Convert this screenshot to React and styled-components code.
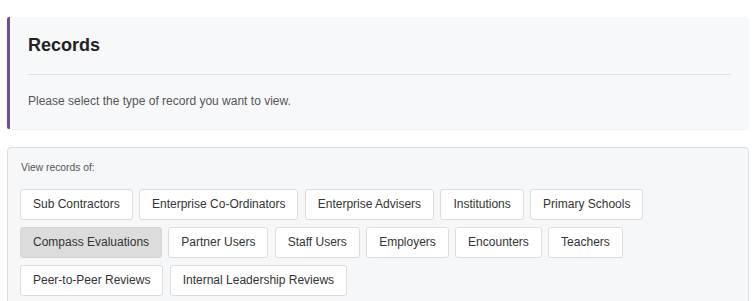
import React from "react";
import styled, { createGlobalStyle } from "styled-components";

const Global = createGlobalStyle`
  html, body { margin: 0; padding: 0; background: #ffffff; }
  body { font-family: "Liberation Sans", Arial, sans-serif; color: #333; }
`;

const Page = styled.div`
  padding: 17px 5px 0 7px;
  display: flex;
  flex-direction: column;
  gap: 18px;
`;

const HeaderCard = styled.section`
  background: #f7f8fa;
  border-left: 3px solid #6f4e9c;
  border-radius: 2px 4px 4px 2px;
  box-shadow: 0 1px 2px rgba(0, 0, 0, 0.06);
  padding: 17.5px 18px 21px 18px;
`;

const Title = styled.h1`
  margin: 0;
  font-size: 18px;
  font-weight: 700;
  color: #222;
  line-height: normal;
`;

const Divider = styled.hr`
  margin: 18.5px 0 19px;
  border: 0;
  border-top: 1px solid #dedfe2;
  height: 0;
`;

const Intro = styled.p`
  margin: 0;
  font-size: 12px;
  color: #555;
  line-height: normal;
`;

const FilterCard = styled.section`
  background: #f6f7f9;
  border: 1px solid #dcdee2;
  border-radius: 4px;
  padding: 13.5px 12px 20px 12px;
`;

const Label = styled.div`
  font-size: 10.3px;
  color: #555;
  line-height: normal;
  margin: 0 0 16px 1px;
`;

const ButtonRows = styled.div`
  display: flex;
  flex-direction: column;
  gap: 7px;
`;

const ButtonRow = styled.div`
  display: flex;
  gap: 6.3px;
`;

const RecordButton = styled.button`
  box-sizing: border-box;
  font-family: "Liberation Sans", Arial, sans-serif;
  font-size: 12px;
  line-height: 17px;
  color: #333;
  padding: 6px 12px;
  height: 31px;
  border: 1px solid ${(p) => (p.$active ? "#d6d6d6" : "#dcdcdc")};
  background: ${(p) => (p.$active ? "#dcdcdc" : "#ffffff")};
  border-radius: 3px;
  cursor: pointer;
  white-space: nowrap;
`;

const rows = [
  ["Sub Contractors", "Enterprise Co-Ordinators", "Enterprise Advisers", "Institutions", "Primary Schools"],
  ["Compass Evaluations", "Partner Users", "Staff Users", "Employers", "Encounters", "Teachers"],
  ["Peer-to-Peer Reviews", "Internal Leadership Reviews"],
];

export default function App() {
  return (
    <>
      <Global />
      <Page>
        <HeaderCard>
          <Title>Records</Title>
          <Divider />
          <Intro>Please select the type of record you want to view.</Intro>
        </HeaderCard>
        <FilterCard>
          <Label>View records of:</Label>
          <ButtonRows>
            {rows.map((row, i) => (
              <ButtonRow key={i}>
                {row.map((t) => (
                  <RecordButton key={t} $active={t === "Compass Evaluations"}>
                    {t}
                  </RecordButton>
                ))}
              </ButtonRow>
            ))}
          </ButtonRows>
        </FilterCard>
      </Page>
    </>
  );
}
